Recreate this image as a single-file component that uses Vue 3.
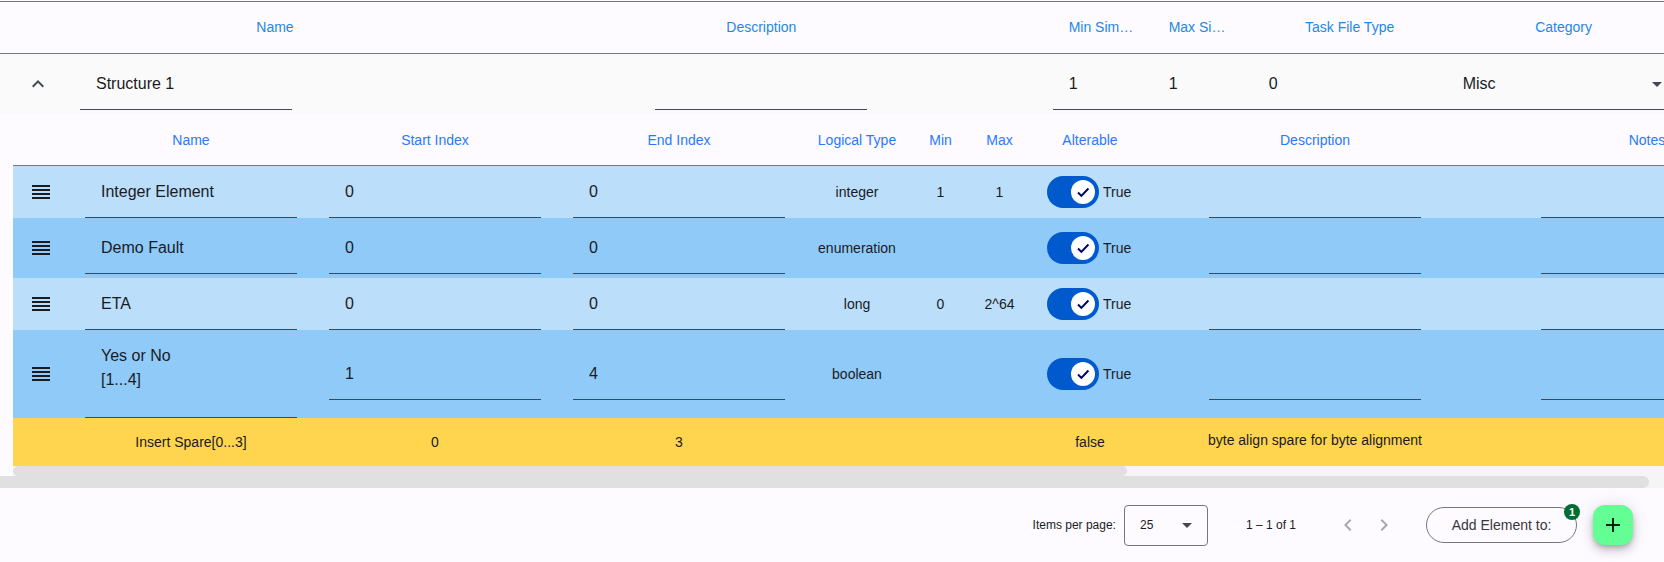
<script setup>
import { ref } from 'vue'

const structure = ref({ name: 'Structure 1', description: '', min: '1', max: '1', task: '0', category: 'Misc' })

const elements = ref([
  { name: 'Integer Element', start: '0', end: '0', type: 'integer', min: '1', max: '1', alterable: true, description: '', notes: '' },
  { name: 'Demo Fault', start: '0', end: '0', type: 'enumeration', min: '', max: '', alterable: true, description: '', notes: '' },
  { name: 'ETA', start: '0', end: '0', type: 'long', min: '0', max: '2^64', alterable: true, description: '', notes: '' },
  { name: 'Yes or No\n[1...4]', start: '1', end: '4', type: 'boolean', min: '', max: '', alterable: true, description: '', notes: '', tall: true },
])

const pageSize = ref('25')
</script>

<template>
  <main class="page">
    <section class="viewport">
      <table class="structures">
        <colgroup>
          <col class="c-expand" />
          <col class="c-name" />
          <col />
          <col class="c-sim" />
          <col class="c-sim" />
          <col class="c-task" />
          <col class="c-category" />
        </colgroup>
        <thead>
          <tr>
            <th></th>
            <th>Name</th>
            <th>Description</th>
            <th class="clipped">Min Sim…</th>
            <th class="clipped">Max Si…</th>
            <th>Task File Type</th>
            <th>Category</th>
          </tr>
        </thead>
        <tbody>
          <tr class="structure">
            <td>
              <button class="expand" type="button" aria-label="Collapse structure">
                <svg viewBox="0 0 24 24" width="24" height="24"><path d="M12 8l-6 6 1.41 1.41L12 10.83l4.59 4.58L18 14z" /></svg>
              </button>
            </td>
            <td><input v-model="structure.name" class="field" type="text" aria-label="Name" /></td>
            <td class="center"><input v-model="structure.description" class="field" type="text" aria-label="Description" /></td>
            <td><input v-model="structure.min" class="field full" type="text" aria-label="Min simultaneity" /></td>
            <td><input v-model="structure.max" class="field full" type="text" aria-label="Max simultaneity" /></td>
            <td><input v-model="structure.task" class="field full" type="text" aria-label="Task file type" /></td>
            <td>
              <div class="picker">
                <select v-model="structure.category" class="field full" aria-label="Category">
                  <option>Misc</option>
                </select>
                <svg class="caret" viewBox="0 0 10 5" width="10" height="5"><path d="M0 0h10L5 5z" /></svg>
              </div>
            </td>
          </tr>
          <tr>
            <td class="detail" colspan="7">
              <div class="inner">
                <table class="elements">
                  <colgroup>
                    <col class="e-drag" />
                    <col class="e-field" />
                    <col class="e-field" />
                    <col class="e-field" />
                    <col class="e-type" />
                    <col class="e-min" />
                    <col class="e-max" />
                    <col class="e-alter" />
                    <col class="e-text" />
                    <col class="e-text" />
                  </colgroup>
                  <thead>
                    <tr>
                      <th></th>
                      <th>Name</th>
                      <th>Start Index</th>
                      <th>End Index</th>
                      <th>Logical Type</th>
                      <th>Min</th>
                      <th>Max</th>
                      <th>Alterable</th>
                      <th>Description</th>
                      <th>Notes</th>
                    </tr>
                  </thead>
                  <tbody>
                    <tr v-for="(el, i) in elements" :key="i" :class="['element', { even: i % 2 === 1, tall: el.tall }]">
                      <td>
                        <svg class="drag" viewBox="0 0 24 24" width="24" height="24"><path d="M3 5h18v2H3zM3 9h18v2H3zM3 13h18v2H3zM3 17h18v2H3z" /></svg>
                      </td>
                      <td>
                        <textarea v-if="el.tall" v-model="el.name" class="field multi" rows="2" aria-label="Element name"></textarea>
                        <input v-else v-model="el.name" class="field" type="text" aria-label="Element name" />
                      </td>
                      <td><input v-model="el.start" class="field" type="text" aria-label="Start index" /></td>
                      <td><input v-model="el.end" class="field" type="text" aria-label="End index" /></td>
                      <td>{{ el.type }}</td>
                      <td>{{ el.min }}</td>
                      <td>{{ el.max }}</td>
                      <td>
                        <label class="toggle">
                          <span class="switch">
                            <input v-model="el.alterable" type="checkbox" />
                            <svg viewBox="0 0 24 24" width="24" height="24"><path d="M7 12.5l3.4 3.4 7-7.4" /></svg>
                          </span>
                          <span>True</span>
                        </label>
                      </td>
                      <td><input v-model="el.description" class="field" type="text" aria-label="Element description" /></td>
                      <td><input v-model="el.notes" class="field" type="text" aria-label="Notes" /></td>
                    </tr>
                    <tr class="spare">
                      <td></td>
                      <td>Insert Spare[0...3]</td>
                      <td>0</td>
                      <td>3</td>
                      <td></td>
                      <td></td>
                      <td></td>
                      <td>false</td>
                      <td class="note">byte align spare for byte alignment</td>
                      <td></td>
                    </tr>
                  </tbody>
                </table>
                <div class="bar inner-bar"><div class="thumb"></div></div>
              </div>
            </td>
          </tr>
        </tbody>
      </table>
      <div class="bar outer-bar"><div class="thumb"></div></div>
    </section>

    <footer class="footer">
      <label class="per-page" for="page-size">Items per page:</label>
      <div class="size">
        <select id="page-size" v-model="pageSize">
          <option>25</option>
        </select>
        <svg class="caret" viewBox="0 0 10 5" width="10" height="5"><path d="M0 0h10L5 5z" /></svg>
      </div>
      <span class="range">1 – 1 of 1</span>
      <nav class="pager">
        <button type="button" aria-label="Previous page" disabled>
          <svg viewBox="0 0 24 24" width="24" height="24"><path d="M15.41 7.41L14 6l-6 6 6 6 1.41-1.41L10.83 12z" /></svg>
        </button>
        <button type="button" aria-label="Next page" disabled>
          <svg viewBox="0 0 24 24" width="24" height="24"><path d="M10 6L8.59 7.41 13.17 12l-4.58 4.59L10 18l6-6z" /></svg>
        </button>
      </nav>
      <button class="add" type="button">Add Element to:<span class="badge">1</span></button>
      <button class="fab" type="button" aria-label="Add">
        <svg viewBox="0 0 24 24" width="24" height="24"><path d="M19 13h-6v6h-2v-6H5v-2h6V5h2v6h6z" /></svg>
      </button>
    </footer>
  </main>
</template>

<style>
body {
  background: #fdfbff;
}
</style>

<style scoped>
.page,
.page * {
  box-sizing: border-box;
}
.page {
  padding-top: 1px;
  color: #1a1b1f;
  font-family: "Liberation Sans", Arial, sans-serif;
  font-size: 14px;
  line-height: 20px;
}
button,
input,
select,
textarea {
  margin: 0;
  font-family: inherit;
  color: inherit;
}
svg {
  display: block;
}
.viewport {
  overflow: hidden;
  border-top: 1px solid #74777f;
}
table {
  table-layout: fixed;
  border-spacing: 0;
}
th,
td {
  padding: 0;
  text-align: center;
  vertical-align: middle;
}
th {
  height: 52px;
  border-bottom: 1px solid #74777f;
  font-weight: 400;
}
.structures {
  width: 101%;
}
.structures th {
  padding-bottom: 2px;
  color: #1e88e5;
}
.c-expand { width: 80px; }
.c-name { width: 390px; }
.c-sim { width: 100px; }
.c-task { width: 194px; }
.c-category { width: 234px; }
.structures th.clipped {
  padding-left: 16px;
  text-align: left;
  white-space: nowrap;
}
.structure td {
  height: 60px;
  background: #fafafa;
  text-align: left;
}
.structure td.center {
  text-align: center;
}
.expand {
  display: block;
  margin-left: 26px;
  padding: 0;
  border: 0;
  background: none;
  fill: #44474e;
}
.field {
  display: block;
  width: 212px;
  height: 52px;
  margin: 0 auto;
  padding: 0 16px;
  border: 0;
  border-bottom: 1px solid #44474e;
  border-radius: 0;
  outline: 0;
  background: none;
  font-size: 16px;
  line-height: 24px;
  resize: none;
  overflow: hidden;
  appearance: none;
}
.structure .field {
  margin: 0;
}
.structure .center .field {
  margin: 0 auto;
}
.structure .full {
  width: 100%;
}
.multi {
  height: 88px;
  padding-top: 14px;
}
.picker,
.size {
  position: relative;
}
.caret {
  position: absolute;
  right: 19px;
  top: calc(50% - 2px);
  fill: #44474e;
  pointer-events: none;
}
.detail .inner {
  margin-left: 13px;
  overflow: hidden;
}
.elements {
  width: 1800px;
}
.elements th {
  padding-bottom: 0;
  color: #2979ff;
}
.e-drag { width: 56px; }
.e-field { width: 244px; }
.e-type { width: 112px; }
.e-min { width: 55px; }
.e-max { width: 63px; }
.e-alter { width: 118px; }
.e-text { width: 332px; }
.element td {
  height: 52px;
  background: #bbdefb;
}
.element.even td {
  height: 60px;
  background: #90caf9;
}
.element.even.tall td {
  height: 88px;
}
.spare td {
  height: 48px;
  background: #ffd54f;
}
.spare td.note {
  padding-bottom: 4px;
}
.drag {
  margin: 0 auto;
  fill: #1a1b1f;
}
.toggle {
  display: flex;
  align-items: center;
  gap: 4px;
  padding-left: 16px;
}
.switch {
  position: relative;
  width: 52px;
  height: 32px;
}
.switch input {
  display: block;
  width: 52px;
  height: 32px;
  border-radius: 16px;
  background: #005ace;
  appearance: none;
}
.switch svg {
  position: absolute;
  top: 4px;
  right: 4px;
  border-radius: 50%;
  background: #fff;
  fill: none;
  stroke: #00006e;
  stroke-width: 2;
  pointer-events: none;
}
.bar .thumb {
  height: 100%;
  background: #e0e0e0;
}
.inner-bar {
  height: 10px;
  background: #f5f4f6;
}
.inner-bar .thumb {
  width: 66.8%;
  border-radius: 5px;
}
.outer-bar {
  height: 12px;
  background: #f5f5f5;
}
.outer-bar .thumb {
  width: 99.1%;
  border-radius: 0 6px 6px 0;
}
.footer {
  display: flex;
  align-items: center;
  justify-content: flex-end;
  height: 74px;
  padding-right: 31px;
  font-size: 12px;
}
.per-page {
  margin-right: 8px;
}
.size select {
  display: block;
  width: 84px;
  height: 41px;
  padding: 0 15px;
  border: 1px solid #74777f;
  border-radius: 4px;
  background: none;
  font-size: 12px;
  appearance: none;
}
.size .caret {
  right: 16px;
}
.range {
  margin: 0 40px 0 38px;
}
.pager {
  display: flex;
  gap: 12px;
  margin-right: 30px;
}
.pager button {
  padding: 0;
  border: 0;
  background: none;
  fill: #a8a8ac;
}
.add {
  position: relative;
  width: 151px;
  height: 36px;
  margin-right: 16px;
  border: 1px solid #74777f;
  border-radius: 18px;
  background: none;
  color: #37383c;
  font-size: 14px;
}
.badge {
  position: absolute;
  top: -4px;
  right: -4px;
  width: 16px;
  height: 16px;
  border-radius: 50%;
  background: #006d32;
  color: #fff;
  font-size: 11px;
  font-weight: 700;
  line-height: 16px;
  text-align: center;
}
.fab {
  display: grid;
  place-items: center;
  width: 40px;
  height: 40px;
  padding: 0;
  border: 0;
  border-radius: 12px;
  background: #63ff94;
  box-shadow: 0 3px 5px -1px rgba(0, 0, 0, 0.2), 0 6px 10px 0 rgba(0, 0, 0, 0.14), 0 1px 18px 0 rgba(0, 0, 0, 0.12);
  fill: #00210b;
}
</style>
